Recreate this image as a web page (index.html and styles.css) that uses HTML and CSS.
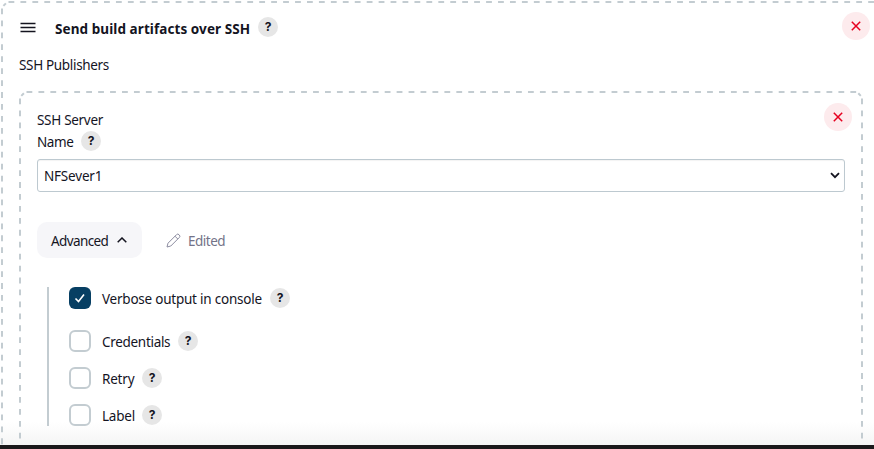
FILE: index.html
```
<!DOCTYPE html>
<html lang="en">
<head>
<meta charset="utf-8">
<title>Send build artifacts over SSH</title>
<link rel="stylesheet" href="styles.css">
</head>
<body>
<main class="chunk">
  <svg class="frame" width="874" height="445"><path d="M8.500 2H874M2 8.500V445"/><path class="corner" d="M3.400 5.900L5.900 3.400"/></svg>
  <header class="chunk-head">
    <svg class="grip" width="16" height="12" viewBox="0 0 16 12"><path d="M.5 1.5h15M.5 5.5h15M.5 9.5h15"/></svg>
    <h1>Send build artifacts over SSH</h1>
    <button class="help">?</button>
    <button class="remove"><svg width="10" height="10" viewBox="0 0 10 10"><path d="M.8.8l8.4 8.4M9.2.8L.8 9.2"/></svg></button>
  </header>
  <div class="publishers">SSH Publishers</div>
  <section class="publisher">
    <svg class="frame" width="846" height="348"><path d="M7.500 1H838M1 7.500V348M843 7.500V348"/><path class="corner" d="M2.300 4.900L4.900 2.300M839.300 2.300L841.800 4.900"/></svg>
    <div class="server-row">
      <div class="server-label">
        <div class="server">SSH Server</div>
        <div class="name"><span>Name</span><button class="help">?</button></div>
      </div>
      <button class="remove"><svg width="10" height="10" viewBox="0 0 10 10"><path d="M.8.8l8.4 8.4M9.2.8L.8 9.2"/></svg></button>
    </div>
    <div class="select"><span>NFSever1</span><svg width="10" height="7" viewBox="0 0 10 7"><path d="M1 1.2l4 4 4-4"/></svg></div>
    <div class="actions">
      <button class="advanced"><span>Advanced</span><svg width="10" height="6" viewBox="0 0 10 6"><path d="M.7 5.3L5 1l4.300 4.300"/></svg></button>
      <span class="edited"><svg width="15" height="15" viewBox="0 0 15 15"><path d="M1 14l1-3.800L10.500 1.700a1.700 1.700 0 0 1 2.500 0l.3.300a1.700 1.700 0 0 1 0 2.500L4.800 13zM9 3.200l2.800 2.800"/></svg><span>Edited</span></span>
    </div>
    <div class="options">
      <div class="option first"><i class="box checked"><svg width="12" height="10" viewBox="0 0 12 10"><path d="M1.500 5.500l3 3 5.500-7"/></svg></i><span class="verbose">Verbose output in console</span><button class="help">?</button></div>
      <div class="option second"><i class="box"></i><span class="credentials">Credentials</span><button class="help">?</button></div>
      <div class="option"><i class="box"></i><span class="retry">Retry</span><button class="help">?</button></div>
      <div class="option"><i class="box"></i><span class="label">Label</span><button class="help">?</button></div>
    </div>
  </section>
</main>
<div class="bar"></div>
</body>
</html>
```
FILE: styles.css
```
* { box-sizing: border-box; }
body { margin: 0; width: 874px; height: 449px; overflow: hidden; background: #fff; color: #14141f; font: 13.5px/20px "Noto Sans", "Open Sans", sans-serif; }
button { border: 0; padding: 0; font: inherit; color: inherit; }
svg { display: block; fill: none; flex: none; }
.chunk { position: relative; height: 445px; overflow: hidden; background: linear-gradient(#fff 422px, #f5f5f5 445px); }
.frame { position: absolute; left: 0; top: 0; stroke: #c3ccd1; stroke-width: 2; stroke-dasharray: 5.8 6.140; pointer-events: none; }
.corner { stroke-dasharray: none; }
.chunk-head { display: flex; align-items: center; padding: 12px 4px 0 20px; height: 40px; }
.grip { stroke: #14141f; stroke-width: 1.6; margin-top: 3px; }
h1 { margin: 5px 8px 0 19px; width: 195px; white-space: nowrap; font-size: 13.5px; line-height: 20px; font-weight: 700; letter-spacing: .08px; }
.help { width: 20px; height: 20px; border-radius: 50%; background: #e6e6e6; font: 700 12px/20px Inter, sans-serif; text-align: center; flex: none; }
.chunk-head .help { margin-top: 2px; }
.remove { width: 28px; height: 28px; border-radius: 50%; background: #fdebed; display: flex; align-items: center; justify-content: center; margin-left: auto; flex: none; stroke: #e6001f; stroke-width: 1.5; }
.publishers { margin: 15px 0 0 19px; letter-spacing: -.33px; }
.publisher { position: relative; margin: 16px 0 0 19px; width: 846px; padding: 12px 13px 0 18px; height: 354px; }
.server-row { display: flex; }
.server { line-height: 20px; margin-top: 7px; letter-spacing: -.3px; }
.name { display: flex; align-items: center; height: 20px; margin-top: 1px; }
.name span { width: 44px; letter-spacing: -.4px; position: relative; top: 1px; }
.select { width: 808px; height: 33px; margin-top: 8px; padding: 0 4px 0 6px; border: 1px solid #bdc9d0; border-radius: 3px; display: flex; align-items: center; justify-content: space-between; background: #fff; box-shadow: inset 0 1px 1px #0000000d; }
.select span { letter-spacing: -.2px; padding-top: 1px; }
.select svg { stroke: #14141f; stroke-width: 1.800; }
.actions { display: flex; align-items: center; margin-top: 30px; }
.advanced { width: 105px; height: 36px; border-radius: 10px; background: #f6f6f9; display: flex; align-items: center; padding-left: 14px; }
.advanced span { width: 66px; text-align: left; letter-spacing: -.6px; padding-top: 1px; }
.advanced svg { stroke: #14141f; stroke-width: 1.500; }
.edited { display: flex; align-items: center; margin-left: 24px; color: #737388; letter-spacing: -.5px; }
.edited span { padding-top: 1px; }
.edited svg { stroke: #8c8ca0; stroke-width: 1; margin-right: 7px; }
.options { margin: 29px 0 0 10px; border-left: 2px solid #c3ccd1; height: 139px; padding-left: 20px; }
.option { display: flex; align-items: center; height: 22px; margin-top: 15px; }
.first { margin-top: 0; }
.second { margin-top: 21px; }
.box { width: 22px; height: 22px; border: 2px solid #c3ccd1; border-radius: 6px; margin-right: 11px; flex: none; background: #fff; }
.checked { border: 0; background: #073f63; display: flex; align-items: center; justify-content: center; }
.checked svg { stroke: #fff; stroke-width: 1.600; }
.option span { white-space: nowrap; position: relative; top: 1px; letter-spacing: -.2px; }
.option .verbose { width: 168px; letter-spacing: -.23px; }
.option .credentials { width: 76px; letter-spacing: -.3px; }
.retry, .label { width: 40px; }
.bar { height: 4px; background: #1b191b; }
```
